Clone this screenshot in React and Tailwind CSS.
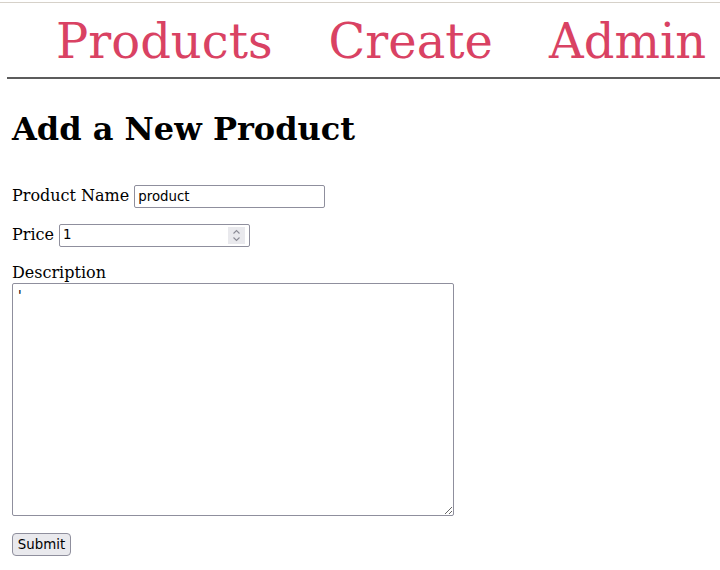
export default function App() {
  const serif = { fontFamily: '"DejaVu Serif", serif' };
  return (
    <div className="min-h-screen bg-white text-black" style={serif}>
      <div className="pt-[2px]">
        <div className="h-px bg-[#d6d1c9]"></div>
      </div>

      <nav className="ml-[7px] border-b-2 border-[#5c5c5c] pt-[14px] pb-[12px]">
        <ul className="flex items-center gap-[56px] pl-[49px] text-[48px] leading-none text-[#d94263] whitespace-nowrap">
          <li>Products</li>
          <li>Create</li>
          <li>Admin</li>
        </ul>
      </nav>

      <main className="px-[12px]">
        <h1 className="mt-[34px] text-[32px] font-bold leading-none">Add a New Product</h1>

        <form className="mt-[39px] flex flex-col text-[16px]">
          <div className="flex items-center gap-[5px]">
            <label htmlFor="name">Product Name</label>
            <input
              id="name"
              type="text"
              defaultValue="product"
              className="h-[23px] w-[191px] rounded-[2px] border border-[#8f8f9d] px-[3px] text-[13.33px] outline-none"
              style={{ fontFamily: '"DejaVu Sans", sans-serif' }}
            />
          </div>

          <div className="mt-[15px] flex items-center gap-[5px]">
            <label htmlFor="price">Price</label>
            <div className="flex h-[23px] w-[191px] items-center rounded-[2px] border border-[#8f8f9d] pl-[3px] pr-[4px]">
              <input
                id="price"
                type="text"
                defaultValue="1"
                className="min-w-0 flex-1 text-[13.33px] outline-none"
                style={{ fontFamily: '"DejaVu Sans", sans-serif' }}
              />
              <div className="flex h-[17px] w-[17px] flex-col items-center justify-center bg-[#e9e9ed]">
                <svg width="9" height="13" viewBox="0 0 9 13" fill="none" stroke="#8b8b95" strokeWidth="1.1">
                  <path d="M1.5 4.5 L4.5 1.5 L7.5 4.5" />
                  <path d="M1.5 8.5 L4.5 11.5 L7.5 8.5" />
                </svg>
              </div>
            </div>
          </div>

          <label htmlFor="desc" className="mt-[16px] leading-[20px]">Description</label>
          <textarea
            id="desc"
            defaultValue="'"
            className="h-[233px] w-[442px] rounded-[2px] border border-[#8f8f9d] px-[5px] py-[2px] text-[13.33px] text-black outline-none"
            style={{ fontFamily: '"DejaVu Sans", sans-serif' }}
          ></textarea>

          <div className="mt-[16px]">
            <button
              type="button"
              className="h-[23px] w-[59px] rounded-[4px] border border-[#8f8f9d] bg-[#e9e9ed] text-[13.33px] leading-none"
              style={{ fontFamily: '"DejaVu Sans", sans-serif' }}
            >
              Submit
            </button>
          </div>
        </form>
      </main>
    </div>
  );
}
